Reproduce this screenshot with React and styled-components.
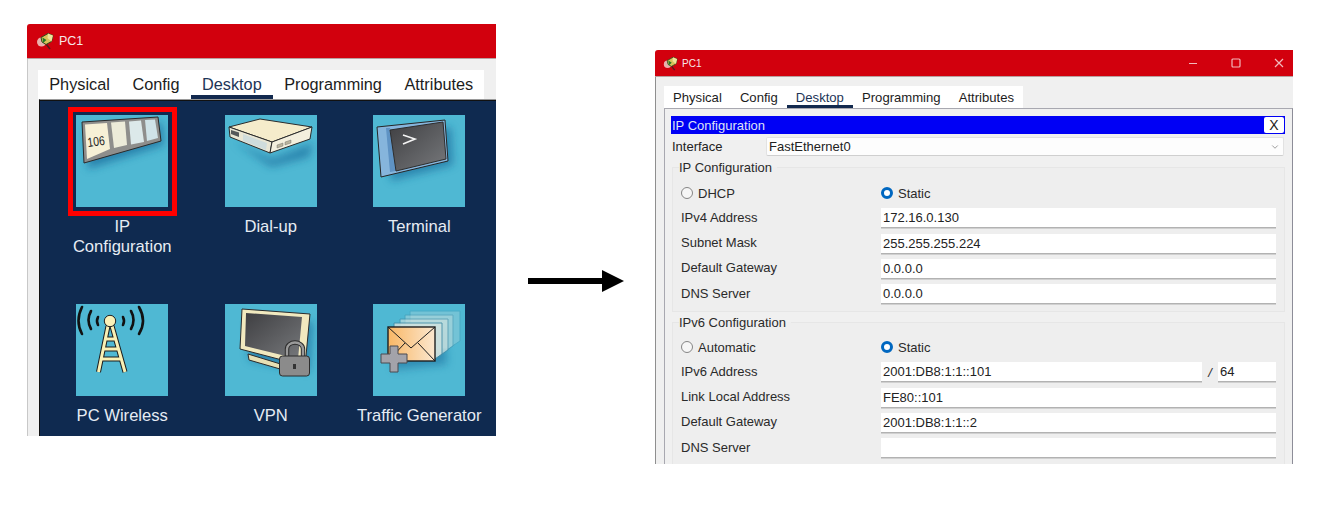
import React from 'react';
import styled, { createGlobalStyle } from 'styled-components';
import { ChevronDown } from 'lucide-react';

const GlobalStyle = createGlobalStyle`
  html, body {
    margin: 0;
    padding: 0;
    background: #fff;
  }
  body {
    font-family: "Liberation Sans", Arial, sans-serif;
  }
`;

const Page = styled.div`
  display: flex;
  align-items: flex-start;
  width: 1318px;
  height: 520px;
  padding-left: 27px;
  box-sizing: border-box;
  overflow: hidden;
`;

const Window = styled.div`
  display: flex;
  flex-direction: column;
  flex: none;
  width: ${(p) => p.$width}px;
  height: ${(p) => p.$height}px;
  margin-top: ${(p) => p.$top}px;
  margin-left: ${(p) => p.$left || 0}px;
  background: #f0f0f0;
  border-top-left-radius: 3px;
  overflow: hidden;
`;

const TitleBar = styled.div`
  display: flex;
  align-items: center;
  flex: none;
  height: ${(p) => p.$height}px;
  padding-left: ${(p) => p.$pad}px;
  gap: ${(p) => p.$gap}px;
  background: #d2000d;
  border-bottom: 1px solid #b9a0a0;
  box-sizing: border-box;
  color: #f6e8e8;
  font-size: ${(p) => p.$size}px;
`;

const WindowControls = styled.div`
  display: flex;
  align-items: center;
  gap: 33px;
  margin-left: auto;
  padding-right: 9px;
`;

const ControlIcon = styled.svg`
  display: block;
  width: 10px;
  height: 10px;
  fill: none;
  stroke: #f2b9bc;
  stroke-width: 1.2;
`;

const TabBar = styled.div`
  display: flex;
  flex: none;
  align-self: flex-start;
  height: ${(p) => p.$height}px;
  margin-top: ${(p) => p.$top}px;
  margin-left: ${(p) => p.$left}px;
  background: #fff;
`;

const Tab = styled.div`
  display: flex;
  align-items: center;
  height: 100%;
  padding: 0 ${(p) => p.$pad}px;
  box-sizing: border-box;
  font-size: ${(p) => p.$size}px;
  color: ${(p) => (p.$active ? '#1d3557' : '#1c1c1c')};
  border-bottom: ${(p) => (p.$active ? `${p.$line}px solid #12294e` : 'none')};
  padding-top: ${(p) => (p.$active ? p.$line : 0)}px;
`;

/* left window */
const DesktopBody = styled.div`
  display: flex;
  flex-direction: column;
  flex: 1;
  min-height: 0;
  border-left: 1px solid #c8c8c8;
`;

const DesktopPanel = styled.div`
  flex: 1;
  display: grid;
  grid-template-columns: repeat(3, 148.5px);
  grid-auto-rows: 189px;
  margin-left: 11px;
  padding: 15px 0 0 8px;
  background: #0f2a50;
  border-top: 1px solid #9a9a9a;
  border-left: 1px solid #111;
  box-shadow: inset 0 1px 0 #111;
`;

const AppItem = styled.div`
  display: flex;
  flex-direction: column;
  align-items: center;
`;

const AppTile = styled.div`
  position: relative;
  width: 92px;
  height: 92px;
  background: #4fb8d3;

  ${(p) =>
    p.$selected &&
    `
    &::after {
      content: '';
      position: absolute;
      inset: -8px -9px -9px -8px;
      border: 5px solid #fe0000;
    }
  `}
`;

const AppLabel = styled.div`
  width: 140px;
  margin-top: 10px;
  color: #e6ecf4;
  font-size: 16.6px;
  line-height: 20px;
  text-align: center;
`;

const ArrowIcon = styled.svg`
  display: block;
  flex: none;
  width: 96px;
  height: 24px;
  margin: 269px 0 0 32px;
`;

/* right window */
const ConfigPanel = styled.div`
  flex: 1;
  display: flex;
  flex-direction: column;
  margin-left: 8px;
  padding: 7px 7px 0 6px;
  border-top: 1px solid #a8a8b0;
  border-left: 1px solid #a8a8b0;
  border-right: 1px solid #8d8d98;
`;

const ConfigWindowBody = styled.div`
  display: flex;
  flex-direction: column;
  flex: 1;
  min-height: 0;
  border-left: 1px solid #8f8f8f;
`;

const BlueHeader = styled.div`
  display: flex;
  align-items: center;
  justify-content: space-between;
  flex: none;
  height: 18px;
  padding-left: 1px;
  background: #0000f5;
  color: #dfe3f5;
  font-size: 13px;
`;

const CloseButton = styled.div`
  display: flex;
  align-items: center;
  justify-content: center;
  width: 20px;
  height: 16px;
  margin-right: 1px;
  background: #fff;
  border-radius: 2px;
  color: #222;
  font-size: 14px;
`;

const InterfaceRow = styled.div`
  display: flex;
  align-items: center;
  flex: none;
  height: 19px;
  margin-top: 3px;
  font-size: 13px;
  color: #222;
`;

const InterfaceLabel = styled.div`
  width: 95px;
  padding-left: 1px;
  box-sizing: border-box;
`;

const InterfaceSelect = styled.div`
  display: flex;
  align-items: center;
  justify-content: space-between;
  flex: 1;
  height: 100%;
  margin-right: 1px;
  padding: 0 3px 0 2px;
  background: #fdfdfd;
  border: 1px solid #e2e2e2;
  border-bottom-color: #cfcfcf;
  border-radius: 2px;
  box-sizing: border-box;
`;

const Group = styled.fieldset`
  flex: none;
  margin: ${(p) => p.$top}px 0 0 1px;
  padding: ${(p) => p.$padTop}px 8px 7px 8px;
  background: #eeeeee;
  border: 1px solid #e6e6e6;
  min-width: 0;
`;

const GroupLegend = styled.legend`
  padding: 0 5px 0 0;
  margin-left: -2px;
  font-size: 13px;
  line-height: 15px;
  color: #2a2a2a;
`;

const GroupRows = styled.div`
  display: flex;
  flex-direction: column;
  gap: 5.25px;
`;

const FormRow = styled.div`
  display: grid;
  grid-template-columns: 200px 1fr;
  align-items: center;
  height: 20px;
  font-size: 13px;
  color: #2a2a2a;
`;

const RowLabel = styled.div`
  padding-bottom: 2px;
`;

const RadioLabel = styled.div`
  display: flex;
  align-items: center;
  gap: 5px;
`;

const RadioDot = styled.span`
  display: block;
  width: 12px;
  height: 12px;
  border-radius: 50%;
  box-sizing: border-box;
  background: ${(p) => (p.$checked ? '#fff' : '#f6f6f6')};
  border: ${(p) => (p.$checked ? '3.5px solid #0067c0' : '1px solid #858585')};
`;

const FieldPair = styled.div`
  display: flex;
  align-items: center;
  height: 100%;
`;

const Field = styled.div`
  flex: ${(p) => (p.$width ? 'none' : 1)};
  width: ${(p) => (p.$width ? `${p.$width}px` : 'auto')};
  height: 100%;
  padding-left: 2px;
  background: #fff;
  border-bottom: 1px solid #b2b2b2;
  box-shadow: 0 1px 0 #d0d0d0;
  box-sizing: border-box;
  font-size: 13px;
  line-height: 19px;
  color: #222;
  white-space: nowrap;
  overflow: hidden;
`;

const Slash = styled.span`
  flex: none;
  width: 16px;
  text-align: center;
  font-style: italic;
`;

const PcIcon = ({ size }) => (
  <svg width={size} height={size} viewBox="0 0 18 18">
    <circle cx="5.5" cy="10" r="4.5" fill="#eab0ac" />
    <path d="M5 5.5L12 1.5 17 3.5 15.5 9.5 10 12.5 6 10z" fill="#d9c25a" stroke="#2f4a1c" strokeWidth="1" />
    <path d="M12 1.5L17 3.5 15.5 9.5 11.5 6z" fill="#f0e49a" />
    <path d="M6.5 5.5L10.5 8 7 11z" fill="#1f7a25" />
    <path d="M10.5 12.5L14 17" stroke="#5a1a1a" strokeWidth="1.6" />
  </svg>
);

const TileDefs = () => (
  <defs>
    <filter id="soft" x="-30%" y="-30%" width="160%" height="160%">
      <feGaussianBlur stdDeviation="4" />
    </filter>
    <linearGradient id="screen" x1="0" y1="0" x2="1" y2="1">
      <stop offset="0" stopColor="#3f3f42" />
      <stop offset="1" stopColor="#77797c" />
    </linearGradient>
    <linearGradient id="mail" x1="0" y1="0" x2="1" y2="0">
      <stop offset="0" stopColor="#f9b765" />
      <stop offset="1" stopColor="#fbe7cf" />
    </linearGradient>
  </defs>
);

const TileSvg = ({ children }) => (
  <svg width="92" height="92" viewBox="0 0 92 92" style={{ display: 'block' }}>
    <TileDefs />
    {children}
  </svg>
);

const IpConfigIcon = () => (
  <TileSvg>
    <path d="M10 14L86 8 88 30 12 54z" fill="#1d6f9f" opacity="0.75" filter="url(#soft)" />
    <path d="M6 7L82 2 85 26 8 48z" fill="#8e8e8c" stroke="#2a2a2a" strokeWidth="1" />
    <path d="M9 9.5L31 8 34 34 11 44z" fill="#f6f0d6" />
    <path d="M35 7.5L49 6.5 51 30 38 33z" fill="#ecebd9" />
    <path d="M53 6.5L65 5.5 68 27 55 29.5z" fill="#dce9ea" />
    <path d="M69 5L79 4.5 82 23 71 26z" fill="#cfe3e8" />
    <text transform="translate(12 32) rotate(-7) scale(0.8 1)" fontSize="13" fill="#222">106</text>
  </TileSvg>
);

const DialUpIcon = () => (
  <TileSvg>
    <path d="M8 26L47 44 88 28 84 42 46 52z" fill="#1d6f9f" opacity="0.7" filter="url(#soft)" />
    <path d="M4 12L35 4 87 12 47 27z" fill="#f5eccb" stroke="#2b2b2b" strokeWidth="1" />
    <path d="M4 12L47 27 45 38 5 22z" fill="#e9e6d4" stroke="#2b2b2b" strokeWidth="1" />
    <path d="M47 27L87 12 85 24 45 38z" fill="#f3efdd" stroke="#2b2b2b" strokeWidth="1" />
    <path d="M6 15L14 17.5 14 22 6 19z" fill="#55585a" />
    <path d="M18 19L42 28 41 35 18 26z" fill="#cfdcdc" />
    <path d="M52 30L58 28 58 31 52 33zM60 27L66 25 66 28 60 30z" fill="#b9b39c" stroke="#666" strokeWidth="0.4" />
  </TileSvg>
);

const TerminalIcon = () => (
  <TileSvg>
    <path d="M14 22L78 12 80 50 18 66z" fill="#1d6f9f" opacity="0.7" filter="url(#soft)" />
    <path d="M4 12L72 5 75 46 8 62z" fill="#86b5dc" stroke="#262626" strokeWidth="1" />
    <path d="M13 13L17 13 23 56 17 57z" fill="#5f93c4" />
    <path d="M17 15L70 7 73 44 23 56z" fill="url(#screen)" stroke="#2d2d2d" strokeWidth="1" />
    <path d="M30 20L42 24 30 29" fill="none" stroke="#f4f4f4" strokeWidth="1.6" />
  </TileSvg>
);

const WirelessIcon = () => (
  <TileSvg>
    <g fill="none" stroke="#111" strokeWidth="2.6" strokeLinecap="round">
      <path d="M6 3Q-1 17 6 30" />
      <path d="M15 7Q10 16 15 25" />
      <path d="M22 13Q20 17 22 21" />
      <path d="M47 13Q49 17 47 21" />
      <path d="M55 7Q60 16 55 25" />
      <path d="M63 3Q71 17 63 30" />
    </g>
    <g fill="none" stroke="#1c1c1c" strokeWidth="5">
      <path d="M32 22L22.5 68M36 22L49 68M29 35H40M27 45H43M25 55H45" />
    </g>
    <g fill="none" stroke="#f9f0b4" strokeWidth="3">
      <path d="M32 22L22.5 68M36 22L49 68M29 35H40M27 45H43M25 55H45" />
    </g>
    <circle cx="34" cy="17" r="5.7" fill="#fbf1b8" stroke="#222" strokeWidth="1" />
  </TileSvg>
);

const VpnIcon = () => (
  <TileSvg>
    <path d="M24 14L88 18 84 68 24 56z" fill="#1d6f9f" opacity="0.7" filter="url(#soft)" />
    <path d="M23 50L62 62 62 67 24 56z" fill="#e8e0b4" stroke="#2b2b2b" strokeWidth="1" />
    <path d="M17 5L85 10 80 62 15 45z" fill="#f1e9bf" stroke="#2b2b2b" strokeWidth="1" />
    <path d="M21 9L77 13 73 55 20 42z" fill="url(#screen)" />
    <path d="M62 52V45a8 6.5 0 0 1 16 0V52" fill="none" stroke="#2c2c2c" strokeWidth="4.4" />
    <path d="M62 52V45a8 6.5 0 0 1 16 0V52" fill="none" stroke="#9a9a9a" strokeWidth="2.4" />
    <rect x="54.5" y="52" width="30" height="20" rx="3" fill="#8b8b8b" stroke="#2c2c2c" strokeWidth="1" />
    <path d="M68 60h3v5h-3z" fill="#333" />
  </TileSvg>
);

const TrafficIcon = () => (
  <TileSvg>
    <path d="M20 30L70 24 74 60 20 66z" fill="#1d6f9f" opacity="0.6" filter="url(#soft)" />
    <g fill="#cfe2df" stroke="#3f8aa5" strokeWidth="1">
      <path d="M37 7H87V37L75 45H37z" opacity="0.28" />
      <path d="M32 11H80V42L70 49H32z" opacity="0.4" />
      <path d="M27 15H75V46L65 53H27z" opacity="0.6" />
      <path d="M21 19H69V50L62 55H21z" opacity="0.85" />
    </g>
    <rect x="15" y="23" width="47" height="34" fill="url(#mail)" stroke="#1e1e1e" strokeWidth="1.4" />
    <path d="M15 23L38 44 62 23M15 57L32 39M62 57L45 39" fill="none" stroke="#1e1e1e" strokeWidth="1" />
    <path d="M17 42H25V50H34V59H25V68H17V59H8V50H17z" fill="#a3a3aa" stroke="#4b4b50" strokeWidth="1" />
  </TileSvg>
);

const desktopApps = [
  { label: 'IP Configuration', Icon: IpConfigIcon, selected: true },
  { label: 'Dial-up', Icon: DialUpIcon },
  { label: 'Terminal', Icon: TerminalIcon },
  { label: 'PC Wireless', Icon: WirelessIcon },
  { label: 'VPN', Icon: VpnIcon },
  { label: 'Traffic Generator', Icon: TrafficIcon },
];

const tabNames = ['Physical', 'Config', 'Desktop', 'Programming', 'Attributes'];

const TabStrip = ({ height, top, left, size, pad, line }) => (
  <TabBar $height={height} $top={top} $left={left}>
    {tabNames.map((name) => (
      <Tab key={name} $size={size} $pad={pad} $line={line} $active={name === 'Desktop'}>
        {name}
      </Tab>
    ))}
  </TabBar>
);

const Radio = ({ checked, children }) => (
  <RadioLabel>
    <RadioDot $checked={checked} />
    {children}
  </RadioLabel>
);

const ipv4Rows = [
  ['IPv4 Address', '172.16.0.130'],
  ['Subnet Mask', '255.255.255.224'],
  ['Default Gateway', '0.0.0.0'],
  ['DNS Server', '0.0.0.0'],
];

const App = () => (
  <>
    <GlobalStyle />
    <Page>
      <Window $width={469} $height={412} $top={24}>
        <TitleBar $height={35} $pad={9} $gap={5} $size={12.5}>
          <PcIcon size={18} />
          PC1
        </TitleBar>
        <DesktopBody>
          <TabStrip height={29} top={11} left={10} size={16.3} pad={11.25} line={4} />
          <DesktopPanel>
            {desktopApps.map(({ label, Icon, selected }) => (
              <AppItem key={label}>
                <AppTile $selected={selected}>
                  <Icon />
                </AppTile>
                <AppLabel>
                  {label === 'IP Configuration' ? (
                    <>
                      IP
                      <br />
                      Configuration
                    </>
                  ) : (
                    label
                  )}
                </AppLabel>
              </AppItem>
            ))}
          </DesktopPanel>
        </DesktopBody>
      </Window>

      <ArrowIcon viewBox="0 0 96 24">
        <path d="M0 9H74V1L96 12 74 23V15H0z" fill="#000" />
      </ArrowIcon>

      <Window $width={638} $height={414} $top={50} $left={31}>
        <TitleBar $height={27} $pad={8} $gap={4} $size={10}>
          <PcIcon size={15} />
          PC1
          <WindowControls>
            <ControlIcon viewBox="0 0 10 10">
              <path d="M1 5.5H9" />
            </ControlIcon>
            <ControlIcon viewBox="0 0 10 10">
              <rect x="1" y="1" width="8" height="8" rx="1" />
            </ControlIcon>
            <ControlIcon viewBox="0 0 10 10">
              <path d="M1 1L9 9M9 1L1 9" />
            </ControlIcon>
          </WindowControls>
        </TitleBar>
        <ConfigWindowBody>
          <TabStrip height={22} top={9} left={8} size={13.1} pad={9.05} line={3} />
          <ConfigPanel>
            <BlueHeader>
              IP Configuration
              <CloseButton>X</CloseButton>
            </BlueHeader>
            <InterfaceRow>
              <InterfaceLabel>Interface</InterfaceLabel>
              <InterfaceSelect>
                FastEthernet0
                <ChevronDown size={10} color="#8a8a8a" />
              </InterfaceSelect>
            </InterfaceRow>

            <Group $top={4} $padTop={8}>
              <GroupLegend>IP Configuration</GroupLegend>
              <GroupRows>
                <FormRow>
                  <Radio>DHCP</Radio>
                  <Radio checked>Static</Radio>
                </FormRow>
                {ipv4Rows.map(([label, value]) => (
                  <FormRow key={label}>
                    <RowLabel>{label}</RowLabel>
                    <Field>{value}</Field>
                  </FormRow>
                ))}
              </GroupRows>
            </Group>

            <Group $top={3} $padTop={7}>
              <GroupLegend>IPv6 Configuration</GroupLegend>
              <GroupRows>
                <FormRow>
                  <Radio>Automatic</Radio>
                  <Radio checked>Static</Radio>
                </FormRow>
                <FormRow>
                  <RowLabel>IPv6 Address</RowLabel>
                  <FieldPair>
                    <Field>2001:DB8:1:1::101</Field>
                    <Slash>/</Slash>
                    <Field $width={58}>64</Field>
                  </FieldPair>
                </FormRow>
                <FormRow>
                  <RowLabel>Link Local Address</RowLabel>
                  <Field>FE80::101</Field>
                </FormRow>
                <FormRow>
                  <RowLabel>Default Gateway</RowLabel>
                  <Field>2001:DB8:1:1::2</Field>
                </FormRow>
                <FormRow>
                  <RowLabel>DNS Server</RowLabel>
                  <Field />
                </FormRow>
              </GroupRows>
            </Group>
          </ConfigPanel>
        </ConfigWindowBody>
      </Window>
    </Page>
  </>
);

export default App;
